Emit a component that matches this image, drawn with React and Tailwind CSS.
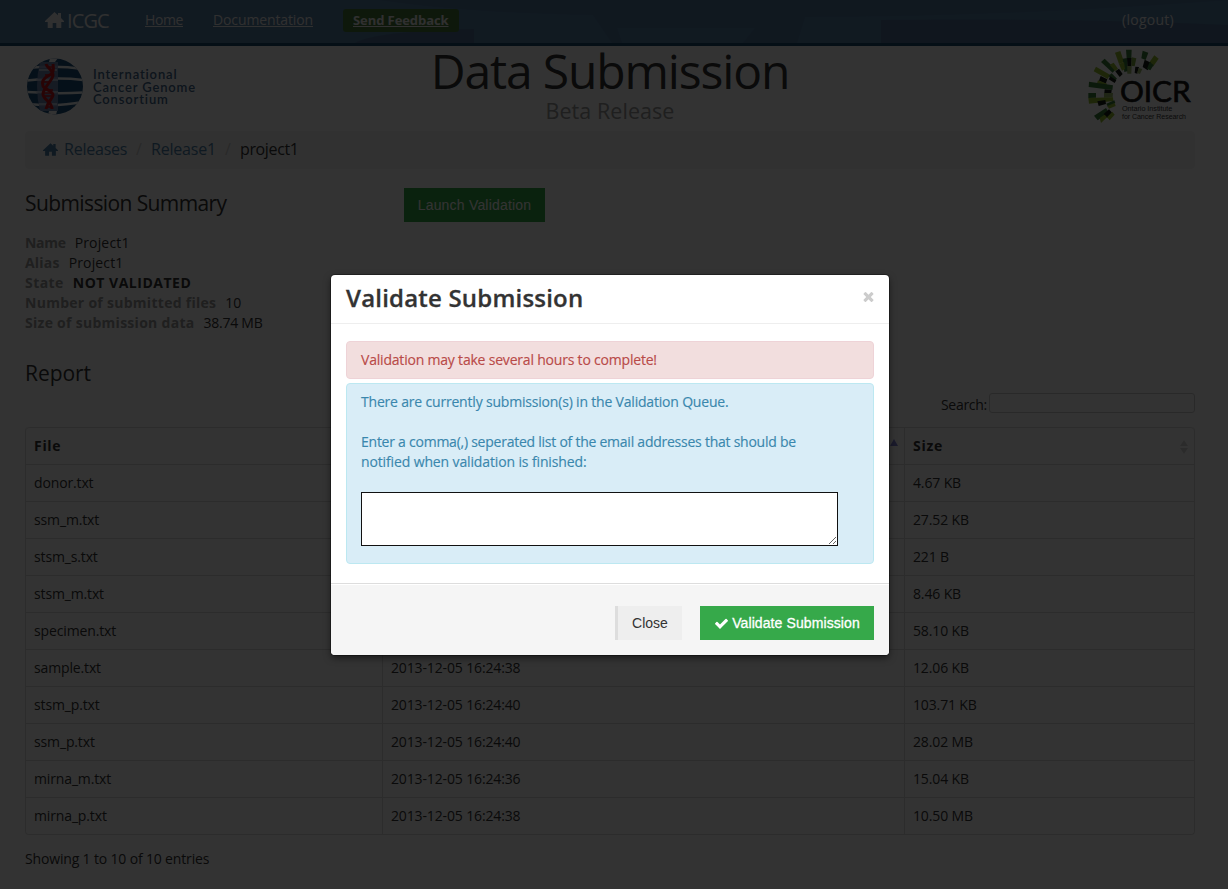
const HOME =
  "M1408 992v480q0 26-19 45t-45 19h-384v-384h-256v384h-384q-26 0-45-19t-19-45v-480q0-1 .5-3t.5-3l575-474 575 474q1 2 1 6zm223-69l-62 74q-8 9-21 11h-3q-13 0-21-7l-692-577-692 577q-12 8-24 7-13-2-21-11l-62-74q-8-10-7-23.5t11-21.5l719-599q32-26 76-26t76 26l244 204v-195q0-14 9-23t23-9h192q14 0 23 9t9 23v408l219 182q10 8 11 21.5t-7 23.5z";
const CHECK =
  "M1671 566q0 40-28 68l-724 724-136 136q-28 28-68 28t-68-28l-136-136-362-362q-28-28-28-68t28-68l136-136q28-28 68-28t68 28l294 295 656-657q28-28 68-28t68 28l136 136q28 28 28 68z";
const TIMES =
  "M1490 1322q0 40-28 68l-136 136q-28 28-68 28t-68-28l-294-294-294 294q-28 28-68 28t-68-28l-136-136q-28-28-28-68t28-68l294-294-294-294q-28-28-28-68t28-68l136-136q28-28 68-28t68 28l294 294 294-294q28-28 68-28t68 28l136 136q28 28 28 68t-28 68l-294 294 294 294q28 28 28 68z";

function Icon({ d, className }) {
  return (
    <svg viewBox="0 0 1792 1792" fill="currentColor" className={className} aria-hidden="true">
      <path d={d} />
    </svg>
  );
}

// Solid house: roof with eaves and a chimney, body with a door opening.
function HomeIcon({ className }) {
  return (
    <svg viewBox="0 0 19 16" fill="currentColor" className={className} aria-hidden="true">
      <path d="M9.500 0L13 3.200V1H16V6L19 9V10H16.300V16H11.300V11H7.700V16H2.700V10H0V9Z" />
    </svg>
  );
}

function Navbar() {
  return (
    <nav className="relative h-[46px] w-full border-b-[3px] border-[#1b4a6e] bg-[#5680a6]">
      <svg className="absolute inset-0 h-[43px] w-[1228px]" viewBox="0 0 1228 43" aria-hidden="true">
        <path
          fill="#50779d"
          d="M380 0Q470 13 593 15L612 43H622L617 28H755L743 43H797L805 17Q1000 17 1228 0Z"
        />
        <path fill="#4f7196" d="M355 43Q375 31 474 29V43ZM881 20Q1080 18 1228 25V43H881Z" />
      </svg>
      <div className="relative flex h-[40px] items-center pl-[45px] pr-[54px] text-sm text-[#eee]">
        <HomeIcon className="h-4 w-[19px]" />
        <span className="ml-[3px] w-[78px] pt-px text-[20px] font-medium leading-5 tracking-[-0.9px]">ICGC</span>
        <a className="w-[68px] tracking-[-0.39px] underline">Home</a>
        <a className="w-[130px] tracking-[-0.12px] underline">Documentation</a>
        <a className="rounded-[3px] bg-[#467a38] px-[10px] py-[2px] text-[13px] font-bold leading-[19px] tracking-[-0.08px] underline">
          Send Feedback
        </a>
        <a className="ml-auto tracking-[0.27px]">(logout)</a>
      </div>
    </nav>
  );
}

function IcgcLogo() {
  return (
    <div className="flex items-center gap-[10px]">
      <svg width="56" height="57" viewBox="0 0 56 57" aria-hidden="true">
        <defs>
          <clipPath id="globe">
            <circle cx="28" cy="28.5" r="28" />
          </clipPath>
        </defs>
        <g clipPath="url(#globe)">
          <rect width="56" height="57" fill="#1b4f7c" />
          <path
            fill="none"
            stroke="#f4f7fa"
            strokeWidth="2.500"
            d="M0 10Q30 7 56 11M0 22.500Q30 19 56 22M0 34Q30 36 56 34.500M0 46Q30 49 56 44"
          />
          <path fill="#7d8fba" opacity="0.85" d="M13 4H31V53H13Q7 28 13 4Z" />
          <path fill="#fff" d="M23 0H31L28 4H22ZM22 53H30L29 57H21Z" />
          <path stroke="#c9d3e5" strokeWidth="1.500" d="M12 12H30M9 22H31M9 34H31M12 46H30" />
        </g>
        <g fill="none" stroke="#c8161d" strokeWidth="3">
          <path d="M26 6C27 12 27 15 21 18S15 25 16 28S26 33 26 37S21 42 19 51" />
          <path d="M19 6C20 10 26 12 26 17S16 30 16 36S25 43 25 51" />
          <path strokeWidth="1.300" d="M18 17H26M16 24H23M18 32H26M17 35H26M18 38H26M20 9H25M20 49H25" />
        </g>
      </svg>
      <div className="pt-px font-[Lato] text-[13px] font-semibold leading-[12.8px] tracking-[0.85px] text-[#44688c]">
        <div>International</div>
        <div>Cancer Genome</div>
        <div>Consortium</div>
      </div>
    </div>
  );
}

const SPOKES = [
  ["#3a7d3a", "917,147 934,147 933,172 919,172"],
  ["#141c14", "920,172 934,172 933,196 921,196"],
  ["#7ea83c", "934,170 948,173 943,197 933,195"],
  ["#9cb86c", "919,196 934,196 933,219 921,219"],
  ["#97bf2e", "884,156 900,151 911,184 896,190"],
  ["#3a7d3a", "907,174 920,172 921,212 912,214"],
  ["#97bf2e", "896,190 911,184 914,205 905,210"],
  ["#3a7d3a", "842,184 853,174 886,206 877,216"],
  ["#97bf2e", "868,192 880,186 893,204 884,211"],
  ["#141c14", "885,212 896,204 907,220 898,229"],
  ["#97bf2e", "827,198 869,222 862,235 820,212"],
  ["#3a7d3a", "864,226 874,218 890,234 882,242"],
  ["#141c14", "841,226 861,236 856,249 836,240"],
  ["#141c14", "870,227 888,239 883,247 865,236"],
  ["#97bf2e", "833,239 860,249 857,257 830,248"],
  ["#3a7d3a", "806,243 878,254 876,268 805,259"],
  ["#141c14", "853,266 874,268 873,277 852,277"],
  ["#3a7d3a", "804,277 827,277 827,291 804,292"],
  ["#9cb86c", "851,277 878,277 877,290 851,291"],
  ["#97bf2e", "804,292 878,290 879,301 806,309"],
  ["#141c14", "831,302 855,298 857,310 835,316"],
  ["#3a7d3a", "858,309 882,299 885,307 863,319"],
  ["#97bf2e", "861,316 883,307 886,316 866,324"],
  ["#3a7d3a", "821,345 857,322 866,336 832,359"],
  ["#141c14", "850,340 866,326 876,337 860,352"],
  ["#97bf2e", "838,352 853,342 860,350 842,367"],
  ["#97bf2e", "860,350 876,333 883,342 868,359"],
  ["#3a7d3a", "967,150 984,156 976,178 963,173"],
  ["#97bf2e", "1002,164 1015,174 998,198 985,188"],
  ["#141c14", "973,177 992,186 982,209 967,199"],
  ["#3a7d3a", "988,184 1000,193 990,209 980,204"],
  ["#141c14", "945,198 956,199 951,219 943,217"],
  ["#9cb86c", "955,202 966,205 959,220 950,217"],
];

function OicrLogo() {
  return (
    <svg className="mr-[3px] h-[75px] w-[105px]" viewBox="800 145 315 225" aria-hidden="true">
      {SPOKES.map(([fill, points]) => (
        <polygon key={points} fill={fill} points={points} />
      ))}
      <text x="899" y="305" textLength="212" lengthAdjust="spacingAndGlyphs" fill="#141414" stroke="#141414" strokeWidth="2" fontFamily="Lato" fontWeight="400" fontSize="84">
        OICR
      </text>
      <g fontFamily="Liberation Sans" fontSize="19" fill="#3a3a3a">
        <text x="905" y="331" textLength="151" lengthAdjust="spacingAndGlyphs">Ontario Institute</text>
        <text x="905" y="354" textLength="192" lengthAdjust="spacingAndGlyphs">for Cancer Research</text>
      </g>
    </svg>
  );
}

const FILES = [
  ["donor.txt", "2013-12-05 16:24:36", "4.67 KB"],
  ["ssm_m.txt", "2013-12-05 16:24:38", "27.52 KB"],
  ["stsm_s.txt", "2013-12-05 16:24:36", "221 B"],
  ["stsm_m.txt", "2013-12-05 16:24:38", "8.46 KB"],
  ["specimen.txt", "2013-12-05 16:24:36", "58.10 KB"],
  ["sample.txt", "2013-12-05 16:24:38", "12.06 KB"],
  ["stsm_p.txt", "2013-12-05 16:24:40", "103.71 KB"],
  ["ssm_p.txt", "2013-12-05 16:24:40", "28.02 MB"],
  ["mirna_m.txt", "2013-12-05 16:24:36", "15.04 KB"],
  ["mirna_p.txt", "2013-12-05 16:24:38", "10.50 MB"],
];

const CELL = "flex items-center border-t border-[#ddd] pl-2";
const CELL_LINED = "flex items-center border-t border-l border-[#ddd] pl-2";

function FileTable() {
  return (
    <div className="overflow-hidden rounded-[4px] border-x border-b border-[#ddd]">
      <div className="grid h-[37px] grid-cols-[356px_522px_290px] rounded-t-[4px] border-t border-[#ddd] font-bold tracking-[0.7px]">
        <div className="flex items-center pl-2">File</div>
        <div className="flex items-center justify-end border-l border-[#ddd] pr-[6px]">
          <svg className="mb-[8px] h-[7px] w-2" viewBox="0 0 8 7" fill="#8080d8">
            <path d="M4 0L8 7H0Z" />
          </svg>
        </div>
        <div className="flex items-center justify-between border-l border-[#ddd] pl-2 pr-[6px]">
          Size
          <svg className="mt-px h-[14px] w-2" viewBox="0 0 8 14" fill="#d8d8d8">
            <path d="M4 0L8 6H0ZM0 8H8L4 14Z" />
          </svg>
        </div>
      </div>
      {FILES.map(([name, updated, size]) => (
        <div key={name} className="grid h-[37px] grid-cols-[356px_522px_290px]">
          <div className={CELL}>{name}</div>
          <div className={CELL_LINED}>{updated}</div>
          <div className={CELL_LINED}>{size}</div>
        </div>
      ))}
    </div>
  );
}

function Detail({ label, children }) {
  return (
    <div className="flex gap-[9px] leading-5">
      <dt className="font-bold text-[#999]">{label}</dt>
      <dd>{children}</dd>
    </div>
  );
}

function Page() {
  return (
    <>
      <Navbar />
      <main className="pl-[25px] pr-[33px] text-sm tracking-[-0.14px] text-[#333]">
        <header className="grid h-[85px] grid-cols-[1fr_auto_1fr]">
          <div className="pl-[2px] pt-[12px]">
            <IcgcLogo />
          </div>
          <div className="text-center">
            <h1 className="text-[48px] leading-[50px] tracking-[-1.15px]">Data Submission</h1>
            <div className="text-[21.5px] font-medium leading-[30px] tracking-[0.05px] text-[#999]">Beta Release</div>
          </div>
          <div className="flex justify-end pt-[3px]">
            <OicrLogo />
          </div>
        </header>

        <div className="flex h-[38px] items-center rounded-[4px] bg-[#f5f5f5] pb-px pl-[18px] text-[16px] text-[#4a7ea6]">
          <HomeIcon className="mr-[6px] h-[13px] w-[15px]" />
          <span className="w-[72px] tracking-[-0.22px]">Releases</span>
          <span className="w-[15px] text-[#ccc]">/</span>
          <span className="w-[74px] tracking-[-0.19px]">Release1</span>
          <span className="w-[15px] text-[#ccc]">/</span>
          <span className="tracking-[-0.37px] text-[#333]">project1</span>
        </div>

        <div className="mt-[14px] flex">
          <section className="w-[379px]">
            <h2 className="text-[21px] leading-10 tracking-[-0.6px]">Submission Summary</h2>
            <dl className="mt-[10px]">
              <Detail label={<span className="tracking-[-0.3px]">Name</span>}>
                <span className="tracking-[0.15px]">Project1</span>
              </Detail>
              <Detail label={<span className="tracking-[0.2px]">Alias</span>}>
                <span className="tracking-[0.15px]">Project1</span>
              </Detail>
              <Detail label={<span className="tracking-[0.45px]">State</span>}>
                <span className="font-bold tracking-[0.5px]">NOT VALIDATED</span>
              </Detail>
              <Detail label={<span className="tracking-[0.28px]">Number of submitted files</span>}>10</Detail>
              <Detail label={<span className="tracking-[0.28px]">Size of submission data</span>}>
                <span className="tracking-[-0.25px]">38.74 MB</span>
              </Detail>
            </dl>
          </section>
          <button className="mt-[5px] h-[34px] w-[141px] bg-[#36a846] font-['Liberation_Sans'] text-sm tracking-[0.2px] text-white">
            Launch Validation
          </button>
        </div>

        <h2 className="mt-5 text-[21px] leading-10 tracking-[-0.05px]">Report</h2>
        <div className="flex h-[34px] justify-end gap-[2px]">
          <label className="pt-[2px] leading-5 tracking-[-0.28px]">Search:</label>
          <div className="h-5 w-[206px] rounded-[3px] border border-[#ccc]" />
        </div>
        <FileTable />
        <p className="mt-[14px] leading-5 tracking-[-0.16px]">Showing 1 to 10 of 10 entries</p>
      </main>
    </>
  );
}

function Modal() {
  return (
    <div className="flex h-[380px] w-[558px] flex-col overflow-hidden rounded-[4px] bg-white text-sm text-[#333] shadow-[0_3px_7px_rgba(0,0,0,0.5),0_0_0_1px_rgba(0,0,0,0.3)]">
      <div className="flex h-[49px] items-center justify-between border-b border-[#eee] pb-[3px] pl-[15px] pr-[13px]">
        <h3 className="text-[24px] font-semibold leading-[30px] tracking-[0.2px] [-webkit-text-stroke:0.3px_#333]">
          Validate Submission
        </h3>
        <Icon d={TIMES} className="mt-[-2px] size-[15px] text-[#ccc]" />
      </div>
      <div className="flex flex-col gap-1 px-[15px] pt-[17px] leading-5">
        <div className="rounded-[4px] border border-[#eed3d7] bg-[#f2dede] px-[14px] py-2 tracking-[-0.2px] text-[#b94a48] [-webkit-text-stroke:0.15px_#b94a48]">
          Validation may take several hours to complete!
        </div>
        <div className="h-[181px] rounded-[4px] border border-[#bce8f1] bg-[#d9edf7] px-[14px] py-2 text-[#3a87ad] [-webkit-text-stroke:0.15px_#3a87ad]">
          <p className="tracking-[-0.19px]">There are currently submission(s) in the Validation Queue.</p>
          <p className="mt-5 tracking-[-0.245px]">
            Enter a comma(,) seperated list of the email addresses that should be
          </p>
          <p className="tracking-[-0.13px]">notified when validation is finished:</p>
          <textarea className="mt-5 block h-[54px] w-[477px] resize border border-[#111] bg-white" />
        </div>
      </div>
      <div className="mt-auto flex h-[72px] justify-end gap-[18px] border-t border-[#ddd] bg-[#f5f5f5] pr-[15px] pt-[22px] font-['Liberation_Sans'] shadow-[inset_0_1px_0_#fff]">
        <button className="h-[34px] w-[67px] border-l-[3px] border-[#ddd] bg-[#eee] text-[#333]">Close</button>
        <button className="flex h-[34px] w-[174px] items-center justify-center gap-[3px] bg-[#36a94a] tracking-[0.1px] text-white [-webkit-text-stroke:0.3px_white]">
          <Icon d={CHECK} className="size-[15px]" />
          Validate Submission
        </button>
      </div>
    </div>
  );
}

export default function App() {
  return (
    <div className="relative h-[889px] w-[1228px] overflow-hidden bg-white font-['Open_Sans',sans-serif]">
      <Page />
      <div className="absolute inset-0 flex items-start bg-black/80 pl-[331px] pt-[275px]">
        <Modal />
      </div>
    </div>
  );
}
